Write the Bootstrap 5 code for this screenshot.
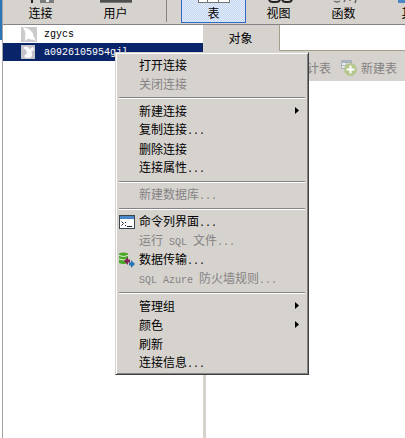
<!DOCTYPE html>
<html lang="zh-CN">
<head>
<meta charset="utf-8">
<meta name="viewport" content="width=device-width, initial-scale=1">
<title>数据库管理</title>
<link href="https://cdn.jsdelivr.net/npm/bootstrap@5.3.0/dist/css/bootstrap.min.css" rel="stylesheet">
<style>
:root { --face: #d6d3ce; --shade: #848284; --navy: #0a246a; }
body { font-family: "Noto Sans CJK SC", sans-serif; font-size: 12px; line-height: 18px; color: #000; background: #fff; }
button { font: inherit; color: inherit; }
svg { display: block; flex: none; }
.latin { font-family: "Liberation Mono", monospace; font-size: 10px; white-space: pre; }
.desk-edge { width: 3px; background: linear-gradient(#2a76b8 40px, #fff 40px); border-right: 1px solid #a5a2a5; }
.face { background: var(--face); }
.ribbon { height: 25px; border-bottom: 1px solid var(--shade); }
.tool { width: 65px; height: 23px; border: 0; background: none; padding: 0; }
.tool-wide { width: 75px; }
.tool-on { border: 1px solid #316ac5; border-top: 0; background: repeating-conic-gradient(#c3d5f0 0% 25%, #e4edfa 0% 50%) 0 0 / 2px 2px; }
.ribbon-rule { width: 1px; height: 22px; margin: 0 14px 0 13px; background: var(--shade); }
.tree { width: 200px; }
.tree-row { height: 18px; padding-left: 18px; gap: 7px; color: #000; }
.tree-row .latin { padding-top: 2px; }
.tree-row.chosen { background: var(--navy); color: #fff; }
.splitter { width: 3px; }
.tabs-row { height: 26px; }
.tab-on { width: 73px; border: 0; padding: 0 4px 0 0; }
.tab-rest { border-left: 1px solid #a59e8c; border-bottom: 1px solid #a59e8c; }
.actions { height: 30px; gap: 10px; padding: 4px 0 0 69px; color: var(--shade); }
.action { border: 0; background: none; padding: 0; gap: 4px; }
.ctx { left: 115px; top: 52px; width: 194px; padding: 1px; background: var(--face);
  border: 1px solid; border-color: var(--face) #404040 #404040 var(--face);
  box-shadow: inset 1px 1px #fff, inset -1px -1px var(--shade); }
.ctx-body { padding: 1px; }
.ctx-item { height: 19px; line-height: 19px; border: 0; background: none; padding: 0 7px 0 1px; gap: 4px; text-align: left; }
.ctx-item:disabled { color: var(--shade); }
.slot { width: 16px; flex: none; }
.ctx-rule { height: 2px; margin: 4px 1px 2px; border-top: 1px solid var(--shade); border-bottom: 1px solid #fff; }
</style>
<script src="https://cdn.jsdelivr.net/npm/bootstrap@5.3.0/dist/js/bootstrap.bundle.min.js"></script>
</head>
<body>
<div class="d-flex vh-100 overflow-hidden position-relative">
  <div class="desk-edge flex-shrink-0"></div>
  <div class="d-flex flex-column flex-grow-1 overflow-hidden">
    <nav class="ribbon face d-flex flex-shrink-0 overflow-hidden">
      <button class="tool tool-wide d-flex flex-column align-items-center flex-shrink-0" type="button">
        <svg width="34" height="4"><path d="M7 0h2v3H7z" fill="#222"/><path d="M16 0h14v3H16z" fill="#7b7d7b"/><path d="M22 0h3v2h-3z" fill="#eee"/></svg>
        <span>连接</span></button>
      <button class="tool tool-wide d-flex flex-column align-items-center flex-shrink-0" type="button">
        <svg width="34" height="4"><path d="M1 0h32v3H1z" fill="#4e504e"/><path d="M1 2h32v1H1z" fill="#777"/></svg>
        <span>用户</span></button>
      <div class="ribbon-rule flex-shrink-0"></div>
      <button class="tool tool-on d-flex flex-column align-items-center flex-shrink-0" type="button">
        <svg width="34" height="4"><path d="M1 0h32v3H1z" fill="#737573"/><path d="M2 0h8v2H2zM11 0h10v2H11zM22 0h10v2H22z" fill="#fff"/></svg>
        <span>表</span></button>
      <button class="tool d-flex flex-column align-items-center flex-shrink-0" type="button">
        <svg width="34" height="4"><path d="M7 0q1 2 4 2h3q3 0 4-2M20 0q1 2 4 2h2q3 0 4-2" fill="none" stroke="#222" stroke-width="2"/></svg>
        <span>视图</span></button>
      <button class="tool d-flex flex-column align-items-center flex-shrink-0" type="button">
        <svg width="34" height="4"><path d="M7 1q3 2 6 0M18 0l-1 2M23 0v1M29 0l-1 3" fill="none" stroke="#666" stroke-width="1.5"/></svg>
        <span>函数</span></button>
      <button class="tool tool-wide d-flex flex-column align-items-center flex-shrink-0" type="button">
        <svg width="34" height="4"><path d="M1 0h32v3H1z" fill="#4a86c6"/></svg>
        <span>其它</span></button>
    </nav>
    <div class="d-flex flex-grow-1 overflow-hidden">
      <aside class="tree flex-shrink-0">
        <a class="tree-row d-flex align-items-center text-decoration-none" href="#">
          <svg width="16" height="16" viewBox="0 0 16 16"><path d="M0 1h16v15H0z" fill="#cdcacd"/><path d="M2 1.500Q6 1 9 4q3 2 3.500 6l2.500 5-3-1.500Q9 14 7 12.500L4.500 15 4 11.500Q5 8 4 5.500z" fill="#fff"/></svg>
          <span class="latin">zgycs</span></a>
        <a class="tree-row chosen d-flex align-items-center text-decoration-none" href="#" aria-current="true">
          <svg width="16" height="16" viewBox="0 0 16 16"><path d="M0 1h14v14H0z" fill="#c5c2ca"/><path d="M2 4q2-2.500 5-1l1.500 2L12 3l1.500 2-3 3q1.500 3-.5 5.500L5 14l-2-2 3-3-1-3z" fill="#fafafa"/></svg>
          <span class="latin">a0926105954gjl</span></a>
      </aside>
      <div class="splitter face flex-shrink-0"></div>
      <main class="flex-grow-1 overflow-hidden">
        <div class="tabs-row d-flex">
          <button class="tab-on face flex-shrink-0" type="button">对象</button>
          <div class="tab-rest flex-grow-1"></div>
        </div>
        <div class="actions face d-flex align-items-center overflow-hidden">
          <button class="action d-flex align-items-center flex-shrink-0" type="button">
            <span class="slot"></span><span>设计表</span></button>
          <button class="action d-flex align-items-center flex-shrink-0" type="button">
            <svg width="16" height="16" viewBox="0 0 16 16"><path d="M0 0h11v9H0z" fill="#a9b4bc"/><path d="M1 3h4v2H1zM6 3h4v2H6zM1 6h4v2H1z" fill="#eceae6"/><circle cx="9.500" cy="9.500" r="6.500" fill="#b5c78f"/><path d="M9.500 5.500v8M5.500 9.500h8" stroke="#fff" stroke-width="2"/></svg>
            <span>新建表</span></button>
        </div>
      </main>
    </div>
  </div>

  <div class="ctx position-absolute">
    <div class="ctx-body">
      <button class="ctx-item d-flex align-items-center w-100" type="button"><span class="slot"></span>打开连接</button>
      <button class="ctx-item d-flex align-items-center w-100" type="button" disabled><span class="slot"></span>关闭连接</button>
      <div class="ctx-rule"></div>
      <button class="ctx-item d-flex align-items-center w-100" type="button"><span class="slot"></span><span class="flex-grow-1">新建连接</span><svg width="4" height="7"><path d="M0 0l4 3.500L0 7z"/></svg></button>
      <button class="ctx-item d-flex align-items-center w-100" type="button"><span class="slot"></span><span>复制连接<span class="latin">...</span></span></button>
      <button class="ctx-item d-flex align-items-center w-100" type="button"><span class="slot"></span>删除连接</button>
      <button class="ctx-item d-flex align-items-center w-100" type="button"><span class="slot"></span><span>连接属性<span class="latin">...</span></span></button>
      <div class="ctx-rule"></div>
      <button class="ctx-item d-flex align-items-center w-100" type="button" disabled><span class="slot"></span><span>新建数据库<span class="latin">...</span></span></button>
      <div class="ctx-rule"></div>
      <button class="ctx-item d-flex align-items-center w-100" type="button">
        <svg width="16" height="14" viewBox="0 0 16 14"><path d="M0 0h16v14H0z" fill="#39454a"/><path d="M1 1h14v12H1z" fill="#fff"/><path d="M1 1h14v3H1z" fill="#4a86c6"/><path d="M2.500 6.500l2 2-2 2" fill="none" stroke="#222"/><path d="M6 7h1v1H6zM6 10h1v1H6zM8 11h5v1H8z" fill="#222"/></svg>
        <span>命令列界面<span class="latin">...</span></span></button>
      <button class="ctx-item d-flex align-items-center w-100" type="button" disabled><span class="slot"></span><span>运行<span class="latin"> SQL </span>文件<span class="latin">...</span></span></button>
      <button class="ctx-item d-flex align-items-center w-100" type="button">
        <svg width="16" height="16" viewBox="0 0 16 16"><path d="M0 1.500Q4.500-.500 9 1.500V11q-4.500 2-9 0z" fill="#4aa829"/><path d="M0 3.500q4.500 2 9 0M0 7q4.500 2 9 0" fill="none" stroke="#e4f3dc"/><path d="M5 9l4-4v2.500h2v3H9V13z" fill="#84205a"/><path d="M16 12l-4 4v-2.500h-2v-3h2V8z" fill="#2875b5"/></svg>
        <span>数据传输<span class="latin">...</span></span></button>
      <button class="ctx-item d-flex align-items-center w-100" type="button" disabled><span class="slot"></span><span><span class="latin">SQL Azure </span>防火墙规则<span class="latin">...</span></span></button>
      <div class="ctx-rule"></div>
      <button class="ctx-item d-flex align-items-center w-100" type="button"><span class="slot"></span><span class="flex-grow-1">管理组</span><svg width="4" height="7"><path d="M0 0l4 3.500L0 7z"/></svg></button>
      <button class="ctx-item d-flex align-items-center w-100" type="button"><span class="slot"></span><span class="flex-grow-1">颜色</span><svg width="4" height="7"><path d="M0 0l4 3.500L0 7z"/></svg></button>
      <button class="ctx-item d-flex align-items-center w-100" type="button"><span class="slot"></span>刷新</button>
      <button class="ctx-item d-flex align-items-center w-100" type="button"><span class="slot"></span><span>连接信息<span class="latin">...</span></span></button>
    </div>
  </div>
</div>
</body>
</html>
